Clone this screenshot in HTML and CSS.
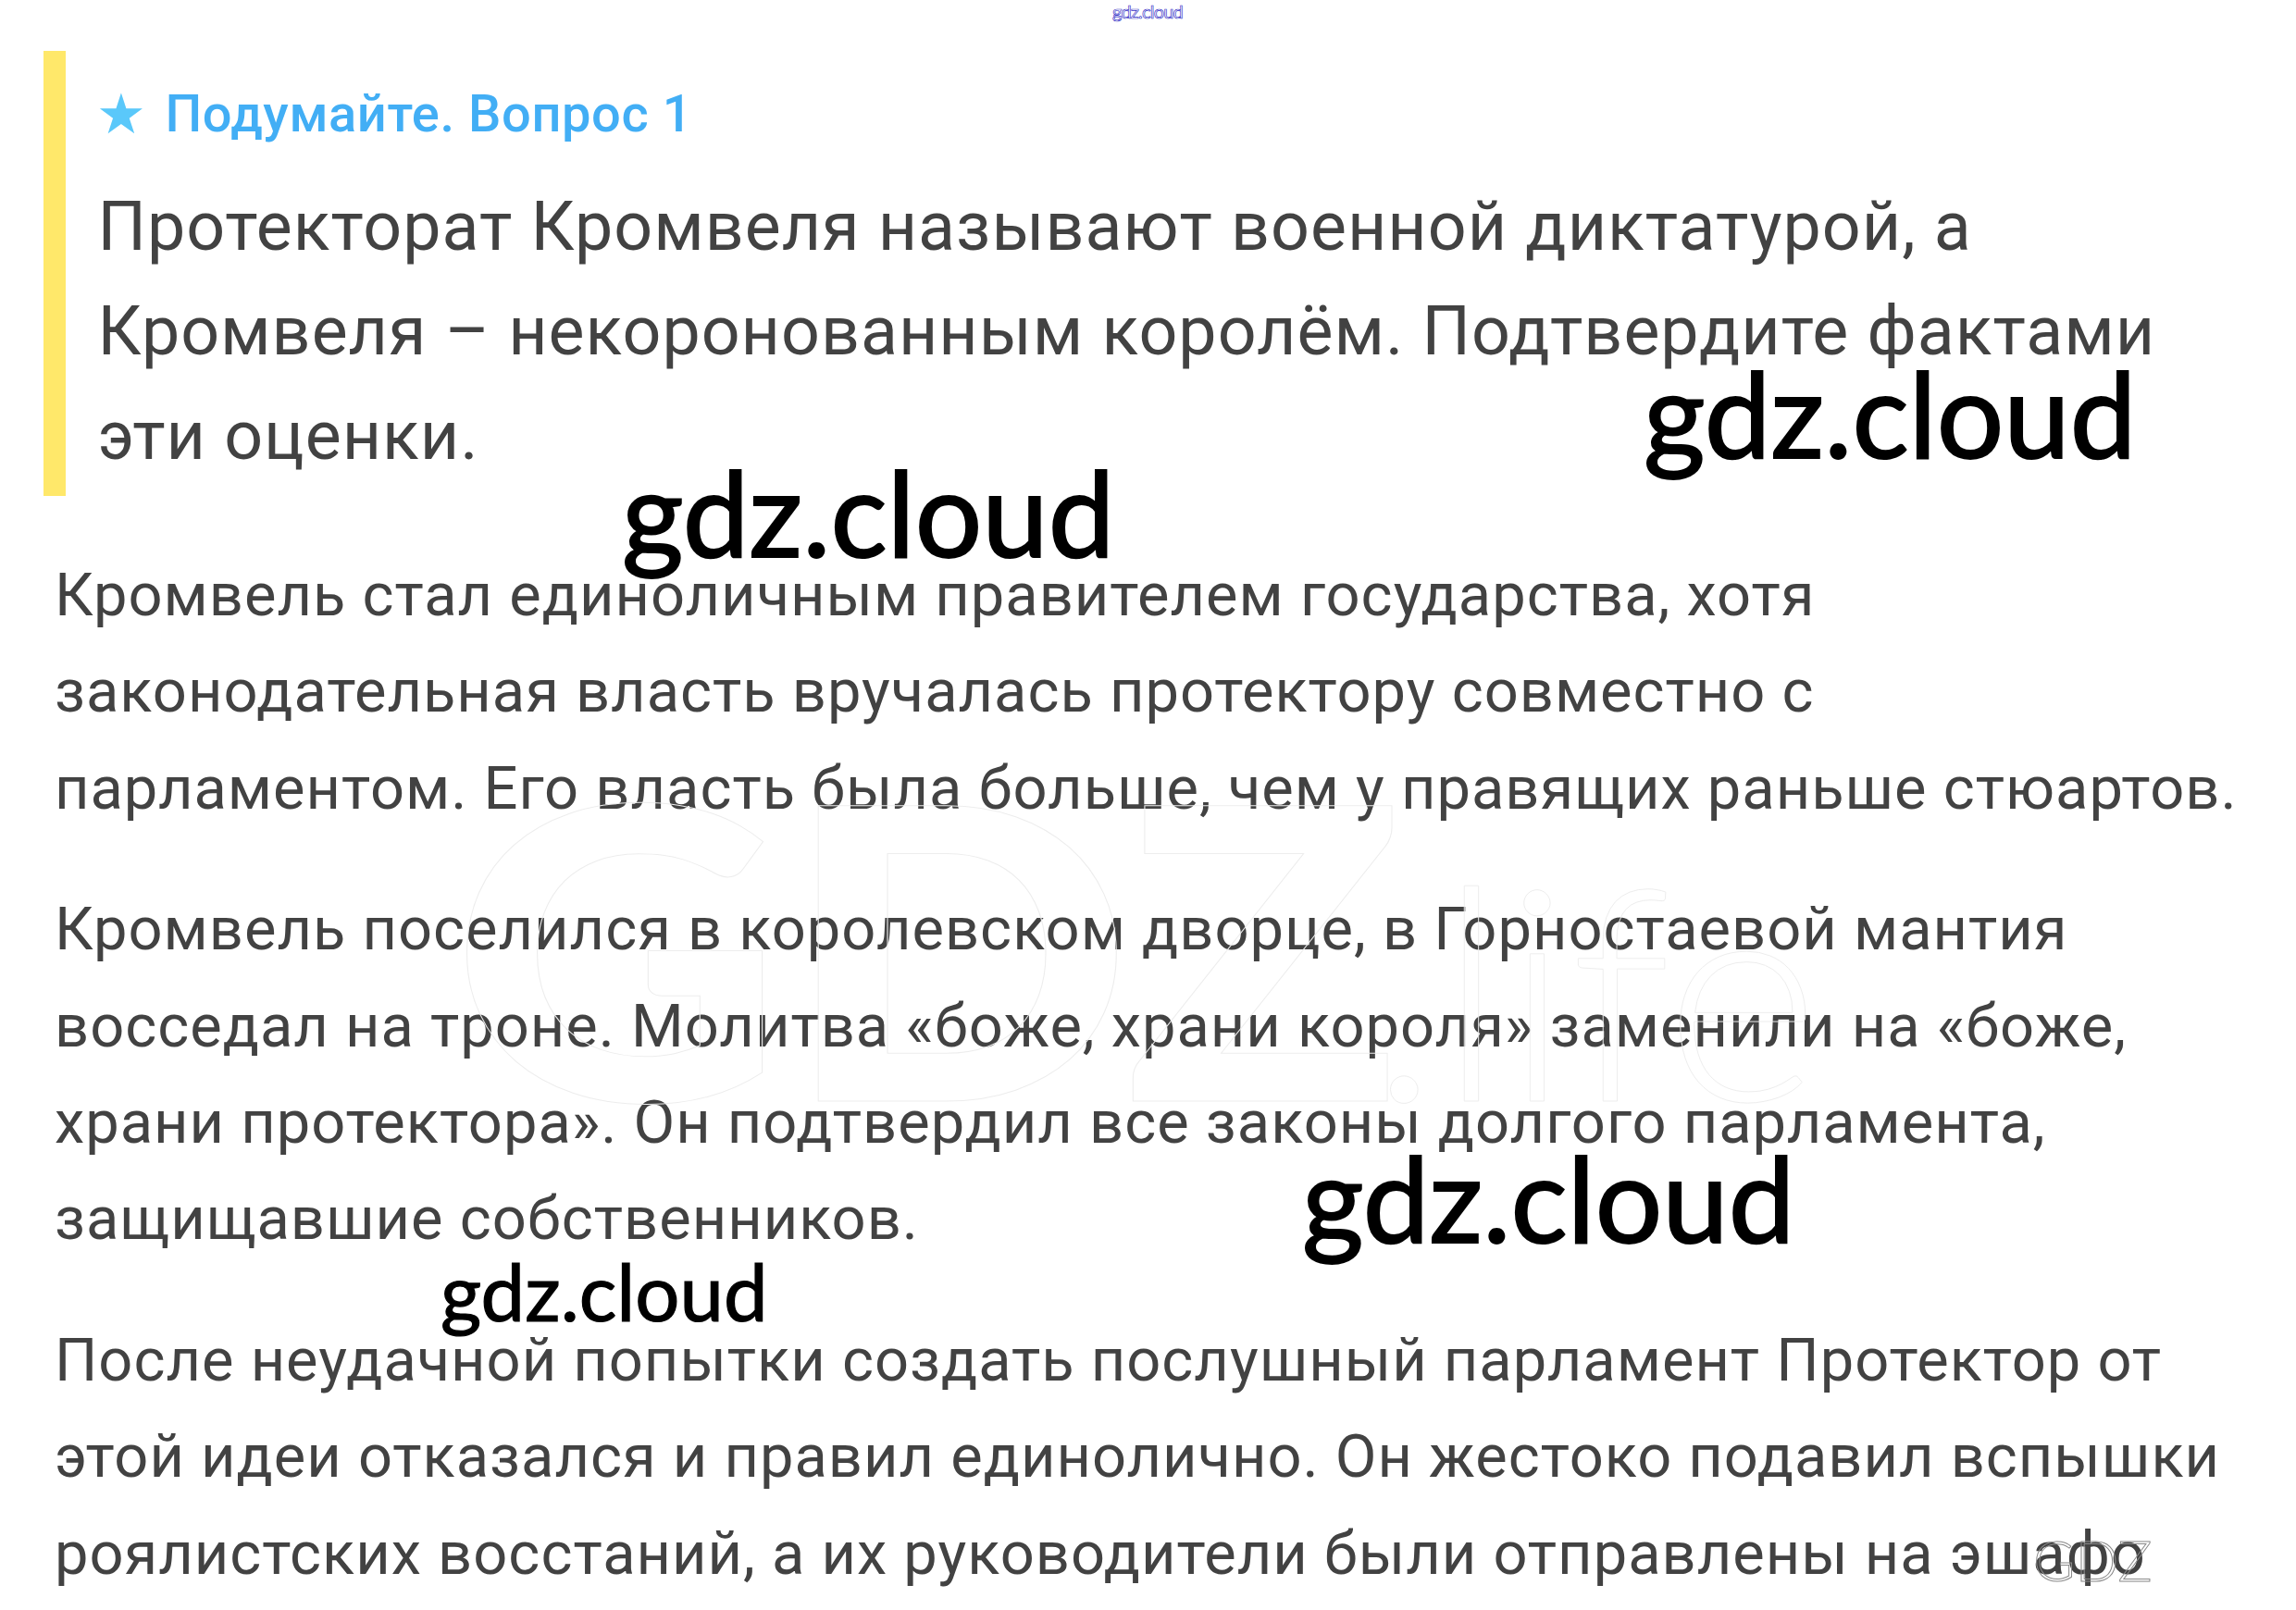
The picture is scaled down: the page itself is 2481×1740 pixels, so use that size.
FILE: index.html
```html
<!DOCTYPE html>
<html lang="ru">
<head>
<meta charset="utf-8">
<title>Подумайте. Вопрос 1</title>
<link rel="stylesheet" href="styles.css">
</head>
<body>
<main class="page">
  <div class="mark-top">gdz.cloud</div>
  <section class="question">
    <h2 class="q-title"><span class="star">★</span><span>Подумайте. Вопрос 1</span></h2>
    <p class="q-text">Протекторат Кромвеля называют военной диктатурой, а<br>Кромвеля – некоронованным королём. Подтвердите фактами<br>эти оценки.</p>
  </section>
  <article class="answer">
    <p>Кромвель стал единоличным правителем государства, хотя<br>законодательная власть вручалась протектору совместно с<br>парламентом. Его власть была больше, чем у правящих раньше стюартов.</p>
    <p>Кромвель поселился в королевском дворце, в Горностаевой мантия<br>восседал на троне. Молитва «боже, храни короля» заменили на «боже,<br>храни протектора». Он подтвердил все законы долгого парламента,<br>защищавшие собственников.</p>
    <p>После неудачной попытки создать послушный парламент Протектор от<br>этой идеи отказался и правил единолично. Он жестоко подавил вспышки<br>роялистских восстаний, а их руководители были отправлены на эшафо</p>
  </article>
  <div class="ghost ghost-big"><span class="ghost-heavy">GDZ</span><span class="ghost-light">.life</span></div>
  <div class="ghost ghost-small">GDZ</div>
  <div class="mark mark-1">gdz.cloud</div>
  <div class="mark mark-2">gdz.cloud</div>
  <div class="mark mark-3">gdz.cloud</div>
  <div class="mark mark-4">gdz.cloud</div>
</main>
</body>
</html>
```
FILE: styles.css
```css
html, body { margin: 0; padding: 0; background: #fff; }
.page {
  position: relative;
  width: 2481px;
  height: 1740px;
  overflow: hidden;
  font-family: Roboto, "Liberation Sans", sans-serif;
  color: #424242;
}
.question {
  margin: 55px 0 0 47px;
  height: 481px;
  box-sizing: border-box;
  border-left: 24px solid #ffe86a;
  padding: 35px 0 0 34.5px;
}
.q-title {
  display: flex;
  align-items: center;
  gap: 20px;
  margin: 0 0 0 -1.5px;
  font-size: 56px;
  line-height: 66px;
  font-weight: 500;
  letter-spacing: 0.6px;
  color: #42aef5;
}
.star { color: #5ac8fa; font-size: 60px; font-family: "DejaVu Sans", sans-serif; }
.q-text {
  margin: 33px 0 0;
  font-size: 73.5px;
  line-height: 113px;
  letter-spacing: 1px;
  white-space: nowrap;
}
.answer { margin: 55px 0 0 59px; }
.answer p {
  margin: 0 0 48.5px;
  font-size: 65px;
  line-height: 104.3px;
  letter-spacing: 1px;
  white-space: nowrap;
}
.mark {
  position: absolute;
  font-family: Lato, sans-serif;
  color: #000;
  font-size: 128px;
  line-height: 1;
  white-space: nowrap;
  -webkit-text-stroke: 2px #000;
}
.mark-1 { left: 1776px; top: 382px; }
.mark-2 { left: 672px; top: 489px; }
.mark-3 { left: 1407px; top: 1230px; }
.mark-4 { left: 476px; top: 1353px; font-size: 85px; -webkit-text-stroke: 1.2px #000; }
.mark-top {
  position: absolute;
  left: 1202px;
  top: 0;
  font-family: Lato, sans-serif;
  font-size: 20px;
  line-height: 24px;
  letter-spacing: -0.8px;
  color: #fff;
  -webkit-text-stroke: 0.7px #3a35c8;
}
.ghost {
  position: absolute;
  font-family: Lato, sans-serif;
  color: transparent;
  white-space: nowrap;
  line-height: 1;
}
.ghost-big {
  left: 488px;
  top: 800px;
  -webkit-text-stroke: 1px #ededed;
}
.ghost-heavy {
  display: inline-block;
  font-size: 440px;
  font-weight: 900;
  transform: scaleX(1.125);
  transform-origin: left;
  margin-right: 78px;
}
.ghost-light { font-size: 320px; font-weight: 300; }
.ghost-small {
  left: 2197px;
  top: 1654px;
  font-size: 62px;
  font-weight: 300;
  -webkit-text-stroke: 1px #8a8a8a;
}
```
